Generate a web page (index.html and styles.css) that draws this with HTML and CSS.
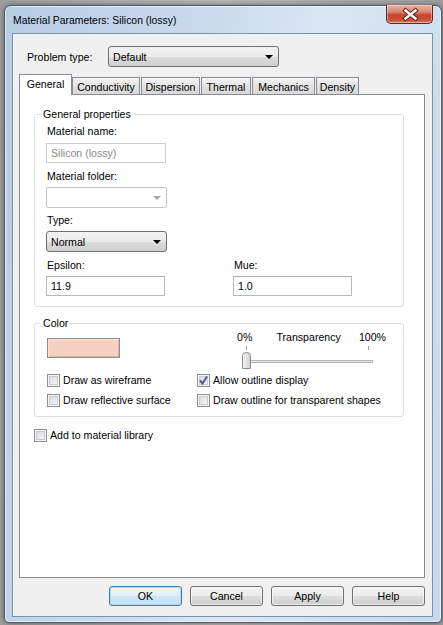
FILE: index.html
```html
<!DOCTYPE html>
<html>
<head>
<meta charset="utf-8">
<link rel="stylesheet" href="styles.css">
</head>
<body>
<div class="window">
  <div class="titlebar">
    <span class="title">Material Parameters: Silicon (lossy)</span>
    <div class="close">
      <svg width="47" height="19" viewBox="0 0 47 19">
        <path d="M18.5 5.5 L28.5 13.5 M28.5 5.5 L18.5 13.5" stroke="#5a2418" stroke-width="4.4" stroke-linecap="square" fill="none"/>
        <path d="M18.5 5.5 L28.5 13.5 M28.5 5.5 L18.5 13.5" stroke="#ffffff" stroke-width="2.4" stroke-linecap="square" fill="none"/>
      </svg>
    </div>
  </div>
  <div class="client">
    <div class="ptype">
      <span class="ptype-label">Problem type:</span>
      <div class="combo combo-btn combo-wide">
        <span>Default</span>
        <svg class="arrow" width="8" height="4" viewBox="0 0 8 4"><path d="M0 0 H8 L4 4 Z" fill="#000"/></svg>
      </div>
    </div>
    <div class="tabs">
      <div class="tab tab-active w-general">General</div>
      <div class="tab w-cond">Conductivity</div>
      <div class="tab w-disp">Dispersion</div>
      <div class="tab w-therm">Thermal</div>
      <div class="tab w-mech">Mechanics</div>
      <div class="tab w-dens">Density</div>
    </div>
    <div class="panel">
      <fieldset class="group group-general">
        <legend>General properties</legend>
        <div class="lbl lbl-first">Material name:</div>
        <div class="edit edit-disabled w120">Silicon (lossy)</div>
        <div class="lbl lbl-b">Material folder:</div>
        <div class="combo combo-disabled w121">
          <span></span>
          <svg class="arrow" width="8" height="4" viewBox="0 0 8 4"><path d="M0 0 H8 L4 4 Z" fill="#a7a7a7"/></svg>
        </div>
        <div class="lbl lbl-c">Type:</div>
        <div class="combo combo-btn w121">
          <span>Normal</span>
          <svg class="arrow" width="8" height="4" viewBox="0 0 8 4"><path d="M0 0 H8 L4 4 Z" fill="#000"/></svg>
        </div>
        <div class="pair">
          <div class="field">
            <div class="lbl lbl-b">Epsilon:</div>
            <div class="edit w119 edit-gap">11.9</div>
          </div>
          <div class="field">
            <div class="lbl lbl-b">Mue:</div>
            <div class="edit w119 edit-gap">1.0</div>
          </div>
        </div>
      </fieldset>

      <fieldset class="group group-color">
        <legend>Color</legend>
        <div class="color-top">
          <div class="swatch"></div>
          <div class="slider">
            <div class="slider-labels"><span>0%</span><span class="tlabel">Transparency</span><span>100%</span></div>
            <svg width="149" height="27" viewBox="0 0 149 27">
              <line x1="9.5" y1="2" x2="9.5" y2="6" stroke="#a0a0a0"/>
              <line x1="131.5" y1="2" x2="131.5" y2="6" stroke="#a0a0a0"/>
              <rect x="7.5" y="16.5" width="128" height="2" fill="#e6e6e6" stroke="#b4b4b4"/>
              <defs>
                <linearGradient id="th" x1="0" y1="0" x2="1" y2="0">
                  <stop offset="0" stop-color="#f4f4f4"/>
                  <stop offset="1" stop-color="#d2d2d2"/>
                </linearGradient>
              </defs>
              <path d="M5.5 11.5 Q5.5 8.5 9.5 8.5 Q13.5 8.5 13.5 11.5 V24.5 H5.5 Z" fill="url(#th)" stroke="#8a8a8a"/>
            </svg>
          </div>
        </div>
        <div class="checks">
          <label class="check"><span class="box"></span>Draw as wireframe</label>
          <label class="check"><span class="box box-checked"><svg width="11" height="11" viewBox="0 0 11 11"><path d="M2 5.5 L4.5 8.5 L9 1.5" stroke="#4a5f9c" stroke-width="2" fill="none"/></svg></span>Allow outline display</label>
          <label class="check"><span class="box"></span>Draw reflective surface</label>
          <label class="check"><span class="box"></span>Draw outline for transparent shapes</label>
        </div>
      </fieldset>

      <label class="check lib"><span class="box"></span>Add to material library</label>
    </div>
    <div class="buttons">
      <div class="btn btn-default">OK</div>
      <div class="btn">Cancel</div>
      <div class="btn">Apply</div>
      <div class="btn">Help</div>
    </div>
  </div>
</div>
</body>
</html>
```

FILE: styles.css
```css
* { box-sizing: border-box; }
html, body { margin: 0; padding: 0; }
body {
  width: 443px;
  height: 625px;
  overflow: hidden;
  background: linear-gradient(90deg, #9c9c9c, #b4b4b4 50%, #9c9c9c);
  font-family: "Liberation Sans", Arial, sans-serif;
  font-size: 10.6px;
  color: #000;
}
.window {
  margin: 5px 0 0 4px;
  width: 438px;
  height: 618px;
  border: 1px solid #4f5d6e;
  border-radius: 7px 7px 5px 5px;
  background: linear-gradient(100deg, #b7cde6 0%, #c7d9ee 35%, #dae6f3 60%, #c6d8ec 100%);
  box-shadow: 0 0 4px rgba(0,0,0,0.45), inset 0 0 0 1px rgba(255,255,255,0.55);
  padding: 0 8px 5px 7px;
  display: flex;
  flex-direction: column;
}
.titlebar {
  height: 27px;
  display: flex;
  align-items: flex-start;
  justify-content: space-between;
}
.title {
  padding: 8px 0 0 1px;
  line-height: 14px;
  font-size: 10.4px;
  color: #000;
}
.close {
  margin-top: -1px;
  width: 47px;
  height: 19px;
  border: 1px solid #5b2a22;
  border-top: none;
  border-radius: 0 0 5px 5px;
  background: linear-gradient(#eab4a8 0%, #d9826f 40%, #c7442c 55%, #c9523a 85%, #dc8a6e 100%);
  box-shadow: inset 0 0 0 1px rgba(255,220,210,0.5);
}
.close svg { display: block; }
.client {
  width: 421px;
  height: 584px;
  border: 1px solid #7f91a5;
  background: #f0f0f0;
  display: flex;
  flex-direction: column;
}
.ptype {
  margin-top: 12px;
  padding-left: 14px;
  display: flex;
  align-items: center;
  height: 21px;
}
.ptype-label { width: 81px; }
.combo {
  height: 21px;
  display: flex;
  align-items: center;
  justify-content: space-between;
  padding: 0 5px 0 4px;
  border-radius: 3px;
}
.combo-btn {
  border: 1px solid #707070;
  background: linear-gradient(#f2f2f2 0%, #ebebeb 50%, #dddddd 50%, #cfcfcf 100%);
}
.combo-disabled {
  border: 1px solid #c2c6ca;
  background: #ffffff;
  border-radius: 2px;
}
.combo-wide { width: 171px; }
.w121 { width: 121px; }
.w120 { width: 120px; }
.w119 { width: 119px; }
.arrow { display: block; }
.tabs {
  margin: 7px 0 0 6px;
  height: 20px;
  display: flex;
  align-items: flex-end;
  gap: 1px;
}
.tab {
  height: 17px;
  border: 1px solid #898c95;
  border-bottom: none;
  background: linear-gradient(#f4f4f4, #e2e2e2 55%, #d9d9d9);
  display: flex;
  align-items: center;
  justify-content: center;
  padding-top: 1px;
}
.tab-active {
  height: 21px;
  margin-bottom: -1px;
  margin-right: -1px;
  background: #ffffff;
  position: relative;
  z-index: 1;
  padding-top: 0;
  padding-bottom: 3px;
}
.w-general { width: 53px; }
.w-cond { width: 68px; }
.w-disp { width: 59px; }
.w-therm { width: 50px; }
.w-mech { width: 63px; }
.w-dens { width: 43px; }
.panel {
  margin-left: 6px;
  width: 406px;
  height: 484px;
  border: 1px solid #898c95;
  background: #ffffff;
  padding: 0 20px 0 14px;
  display: flex;
  flex-direction: column;
  align-items: flex-start;
}
.group {
  margin: 0;
  width: 370px;
  min-inline-size: 0;
  border: 1px solid #d5dfe5;
  border-radius: 3px;
  padding: 0 10px 10px 11px;
}
.group legend {
  padding: 0 2px;
  margin-left: -5px;
  line-height: 14px;
}
.group-general { margin-top: 12px; }
.group-color { margin-top: 9px; padding-bottom: 9px; }
.lbl { line-height: 14px; height: 14px; padding-left: 1px; }
.lbl-first { margin-top: 3px; }
.lbl-b { margin-top: 6px; }
.lbl-c { margin-top: 5px; }
.edit {
  height: 20px;
  border: 1px solid #b5b9c0;
  border-top-color: #abadb3;
  background: #fff;
  padding: 0 4px;
  line-height: 18px;
  margin-top: 5px;
}
.edit-gap { margin-top: 4px; }
.edit-disabled { color: #8a8a8a; border-color: #c8ccd2; }
.combo-disabled, .lbl-b + .combo { margin-top: 4px; }
.lbl-c + .combo { margin-top: 4px; }
.pair {
  display: grid;
  grid-template-columns: 187px 1fr;
}
.color-top {
  display: flex;
  align-items: flex-start;
}
.swatch {
  margin: 8px 0 0 1px;
  width: 73px;
  height: 20px;
  border: 1px solid #8c8c8c;
  background: #f6d0c0;
  box-shadow: inset 1px 1px 0 #fbe3d8, inset -1px -1px 0 #dcb4a4;
}
.slider {
  margin-left: 117px;
  width: 149px;
}
.slider svg { display: block; }
.slider-labels {
  display: flex;
  justify-content: space-between;
  line-height: 14px;
  height: 14px;
}
.tlabel { margin-left: 6px; }
.checks {
  margin-top: 3px;
  display: grid;
  grid-template-columns: 150px 1fr;
  row-gap: 7px;
}
.check {
  display: flex;
  align-items: center;
  height: 13px;
  margin-left: 1px;
  line-height: 13px;
  white-space: nowrap;
}
.box {
  width: 13px;
  height: 13px;
  border: 1px solid #8e8f8f;
  background: linear-gradient(135deg, #d2d4d8, #f4f4f6 80%);
  box-shadow: inset 0 0 0 1px #f6f6f6, inset 0 0 0 2px #c9cdd2;
  margin-right: 3px;
  flex: none;
  display: flex;
  align-items: center;
  justify-content: center;
}
.box-checked svg { display: block; }
.lib { margin: 12px 0 0 0; }
.buttons {
  margin-top: 8px;
  padding-right: 7px;
  display: flex;
  justify-content: flex-end;
  gap: 8px;
}
.btn {
  width: 73px;
  height: 20px;
  border: 1px solid #707070;
  border-radius: 3px;
  background: linear-gradient(#f2f2f2 0%, #ebebeb 50%, #dddddd 50%, #cfcfcf 100%);
  box-shadow: inset 0 0 0 1px rgba(255,255,255,0.6);
  display: flex;
  align-items: center;
  justify-content: center;
}
.btn-default {
  border-color: #3c7fb1;
  background: linear-gradient(#eef6fb 0%, #e2eef7 50%, #d3e5f2 50%, #c9dff0 100%);
  box-shadow: inset 0 0 0 1px #a9dbf6;
}
```
